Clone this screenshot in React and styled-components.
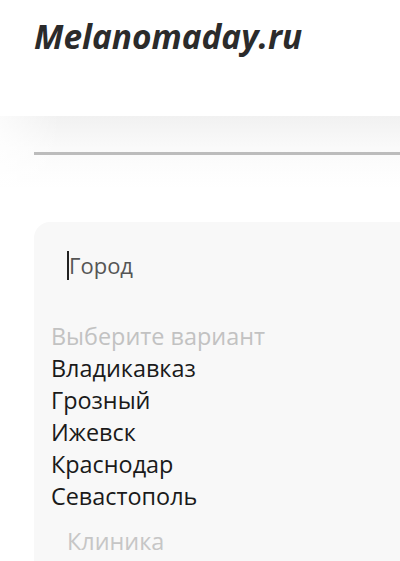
import React from 'react'
import styled, { createGlobalStyle } from 'styled-components'

const GlobalStyle = createGlobalStyle`
  html, body {
    margin: 0;
    padding: 0;
    background: #fff;
    font-family: "Open Sans", "Noto Sans", sans-serif;
    overflow: hidden;
  }
`

const cities = ['Владикавказ', 'Грозный', 'Ижевск', 'Краснодар', 'Севастополь']

const App = () => {
    return (<>
        <GlobalStyle />
        <Page>
            <Header>
                <Logo>Melanomaday.ru</Logo>
            </Header>
            <Band>
                <Rule />
            </Band>
            <Card>
                <Field>
                    <Caret />
                    <FieldText>Город</FieldText>
                </Field>
                <Options>
                    <Option placeholder>Выберите вариант</Option>
                    {cities.map(c => <Option key={c}>{c}</Option>)}
                </Options>
                <NextField>Клиника</NextField>
            </Card>
        </Page>
    </>)
}

const Page = styled.main`
    width: 400px;
    height: 561px;
    overflow: hidden;
`

const Header = styled.header`
    height: 116px;
    padding-left: 34px;
    box-sizing: border-box;
    padding-top: 12px;
`

const Logo = styled.h1`
    margin: 0;
    font-family: "Open Sans", sans-serif;
    font-weight: 700;
    font-style: italic;
    font-size: 33.4px;
    line-height: 48px;
    color: #2b2b2b;
`

const Band = styled.div`
    height: 72px;
    padding-left: 34px;
    padding-top: 36px;
    box-sizing: border-box;
    background:
        linear-gradient(to right, rgba(255,255,255,0.7), rgba(255,255,255,0) 60px),
        linear-gradient(to bottom, #f1f1f1, #fafafa 45%, #ffffff);
`

const Rule = styled.div`
    height: 3px;
    background: #bcbcbc;
`

const Card = styled.section`
    margin: 34px 0 0 34px;
    background: #f8f8f8;
    border-radius: 16px 0 0 0;
    padding: 23px 0 40px 17px;
    min-height: 400px;
`

const Field = styled.div`
    display: flex;
    align-items: center;
    padding-left: 16px;
    height: 40px;
`

const Caret = styled.span`
    width: 2px;
    height: 29px;
    background: #222;
`

const FieldText = styled.span`
    font-size: 22px;
    color: #555;
    line-height: 40px;
`

const Options = styled.ul`
    list-style: none;
    margin: 35px 0 0 0;
    padding: 0;
`

const Option = styled.li`
    font-size: 23.4px;
    line-height: 32px;
    color: ${p => p.placeholder ? '#c2c2c2' : '#1a1a1a'};
`

const NextField = styled.div`
    margin-top: 13px;
    padding-left: 16px;
    font-size: 23.4px;
    line-height: 32px;
    color: #c6c6c6;
`

export default App
